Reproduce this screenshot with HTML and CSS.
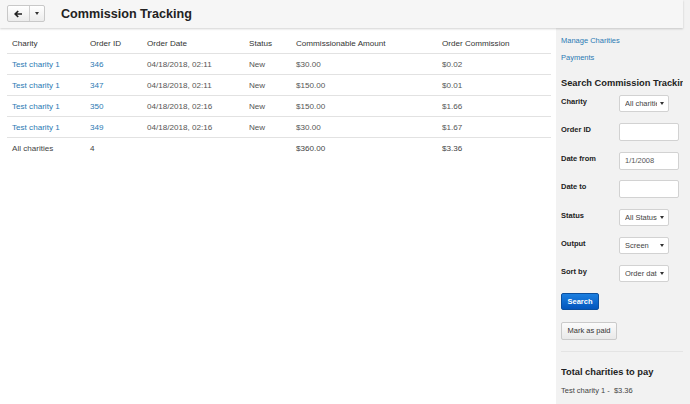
FILE: index.html
```html
<!DOCTYPE html>
<html>
<head>
<meta charset="utf-8">
<link rel="stylesheet" href="styles.css">
</head>
<body>
<header class="topbar">
  <div class="btn-group">
    <span class="tb-btn back"><svg width="9" height="8" viewBox="0 0 9 8"><path d="M4.2 1 L1.2 4 L4.2 7 M1.4 4 H8" fill="none" stroke="#222" stroke-width="1.7"/></svg></span>
    <span class="tb-btn drop"><span class="mini-caret"></span></span>
  </div>
  <h1 class="title">Commission Tracking</h1>
</header>
<div class="layout">
  <main class="main">
    <table class="grid">
      <colgroup>
        <col style="width:78px"><col style="width:57px"><col style="width:102px"><col style="width:47px"><col style="width:146px"><col style="width:114px">
      </colgroup>
      <thead>
        <tr><th>Charity</th><th>Order ID</th><th>Order Date</th><th>Status</th><th>Commissionable Amount</th><th>Order Commission</th></tr>
      </thead>
      <tbody>
        <tr><td><a class="lnk">Test charity 1</a></td><td><a class="lnk">346</a></td><td>04/18/2018, 02:11</td><td>New</td><td>$30.00</td><td>$0.02</td></tr>
        <tr><td><a class="lnk">Test charity 1</a></td><td><a class="lnk">347</a></td><td>04/18/2018, 02:11</td><td>New</td><td>$150.00</td><td>$0.01</td></tr>
        <tr><td><a class="lnk">Test charity 1</a></td><td><a class="lnk">350</a></td><td>04/18/2018, 02:16</td><td>New</td><td>$150.00</td><td>$1.66</td></tr>
        <tr><td><a class="lnk">Test charity 1</a></td><td><a class="lnk">349</a></td><td>04/18/2018, 02:16</td><td>New</td><td>$30.00</td><td>$1.67</td></tr>
        <tr class="total"><td>All charities</td><td>4</td><td></td><td></td><td>$360.00</td><td>$3.36</td></tr>
      </tbody>
    </table>
  </main>
  <aside class="sidebar">
    <a class="side-link">Manage Charities</a>
    <a class="side-link">Payments</a>
    <h2 class="side-title">Search Commission Tracking</h2>
    <div class="form">
      <div class="frow"><span class="flabel">Charity</span><div class="sel"><span class="sel-text">All charities</span><span class="caret"></span></div></div>
      <div class="frow"><span class="flabel">Order ID</span><div class="inp"></div></div>
      <div class="frow"><span class="flabel">Date from</span><div class="inp">1/1/2008</div></div>
      <div class="frow"><span class="flabel">Date to</span><div class="inp"></div></div>
      <div class="frow"><span class="flabel">Status</span><div class="sel"><span class="sel-text">All Statuses</span><span class="caret"></span></div></div>
      <div class="frow"><span class="flabel">Output</span><div class="sel"><span class="sel-text">Screen</span><span class="caret"></span></div></div>
      <div class="frow"><span class="flabel">Sort by</span><div class="sel"><span class="sel-text">Order date</span><span class="caret"></span></div></div>
    </div>
    <div class="btn-primary">Search</div>
    <div class="btn-default">Mark as paid</div>
    <div class="side-sep"></div>
    <h2 class="side-title total-title">Total charities to pay</h2>
    <div class="side-text">Test charity 1 -&nbsp; $3.36</div>
  </aside>
</div>
</body>
</html>
```
FILE: styles.css
```css
html, body {
  margin: 0;
  padding: 0;
}
body {
  width: 690px;
  height: 404px;
  overflow: hidden;
  background: #f2f2f2;
  font-family: "Liberation Sans", Arial, sans-serif;
  color: #333;
}
.topbar {
  height: 28px;
  margin-right: 7px;
  background: #f6f6f6;
  box-shadow: 0 1px 2px rgba(0,0,0,0.18);
  display: flex;
  align-items: center;
  position: relative;
  z-index: 1;
  box-sizing: border-box;
  padding-left: 7px;
}
.btn-group {
  display: flex;
  height: 17px;
  margin-top: -1px;
  border: 1px solid #c8c8c8;
  border-radius: 2px;
  box-sizing: border-box;
  background: linear-gradient(#ffffff, #ececec);
}
.tb-btn {
  display: flex;
  align-items: center;
  justify-content: center;
}
.back {
  width: 21px;
  border-right: 1px solid #cfcfcf;
}
.drop {
  width: 14px;
}
.mini-caret {
  width: 0;
  height: 0;
  border-left: 2.5px solid transparent;
  border-right: 2.5px solid transparent;
  border-top: 3px solid #333;
}
.title {
  margin: 0 0 0 16px;
  font-size: 12.6px;
  font-weight: bold;
  color: #222;
}
.layout {
  display: flex;
  height: 376px;
}
.main {
  flex: 1;
  background: #fff;
  padding: 5px 0 0 7px;
}
.grid {
  width: 544px;
  border-collapse: collapse;
  table-layout: fixed;
  font-size: 8.1px;
}
.grid th, .grid td {
  height: 20px;
  padding: 0 0 0 5px;
  text-align: left;
  white-space: nowrap;
  border-bottom: 1px solid #e2e2e2;
  vertical-align: middle;
}
.grid th {
  font-weight: normal;
  color: #333;
}
.grid td {
  color: #555;
}
.grid tr.total td {
  border-bottom: none;
  color: #444;
}
.lnk {
  color: #2b7ab4;
  text-decoration: none;
}
.sidebar {
  width: 134px;
  box-sizing: border-box;
  padding: 4px 7px 0 5px;
  overflow: hidden;
  display: flex;
  flex-direction: column;
  align-items: flex-start;
}
.side-link {
  display: block;
  font-size: 7.5px;
  line-height: 17px;
  color: #2b7ab4;
}
.side-title {
  margin: 10px 0 0 0;
  font-size: 9.3px;
  line-height: 14px;
  font-weight: bold;
  color: #222;
  white-space: nowrap;
  width: 122px;
  overflow: hidden;
}
.form {
  margin-top: 4px;
  width: 100%;
}
.frow {
  display: flex;
  height: 28.4px;
  align-items: flex-start;
}
.flabel {
  width: 58px;
  padding-top: 3px;
  font-size: 7.5px;
  line-height: 9px;
  font-weight: bold;
  color: #222;
  flex-shrink: 0;
}
.sel {
  margin-top: 1px;
  width: 50px;
  height: 17px;
  box-sizing: border-box;
  border: 1px solid #d2d2d2;
  border-radius: 2px;
  background: #fff;
  display: flex;
  align-items: center;
  padding: 0 4px 0 5px;
  font-size: 7.5px;
  color: #444;
}
.sel-text {
  flex: 1;
  overflow: hidden;
  white-space: nowrap;
}
.caret {
  flex-shrink: 0;
  margin-left: 3px;
  width: 0;
  height: 0;
  border-left: 2px solid transparent;
  border-right: 2px solid transparent;
  border-top: 3px solid #333;
}
.inp {
  margin-top: 1px;
  width: 60px;
  height: 18px;
  box-sizing: border-box;
  border: 1px solid #d2d2d2;
  border-radius: 2px;
  background: #fff;
  padding-left: 5px;
  font-size: 7.5px;
  line-height: 16px;
  color: #555;
}
.btn-primary {
  margin-top: 0;
  height: 17px;
  width: 38px;
  box-sizing: border-box;
  border: 1px solid #0b4f9e;
  border-radius: 2px;
  background: linear-gradient(#1c7fe0, #0356bd);
  color: #fff;
  font-size: 7.5px;
  font-weight: bold;
  display: flex;
  align-items: center;
  justify-content: center;
}
.btn-default {
  margin-top: 12px;
  height: 18px;
  width: 56px;
  box-sizing: border-box;
  border: 1px solid #cacaca;
  border-radius: 2px;
  background: linear-gradient(#fbfbfb, #e9e9e9);
  color: #333;
  font-size: 7.5px;
  display: flex;
  align-items: center;
  justify-content: center;
}
.side-sep {
  margin-top: 11px;
  width: 122px;
  border-top: 1px solid #e4e4e4;
}
.total-title {
  margin-top: 13px;
}
.side-text {
  margin-top: 6px;
  font-size: 7.5px;
  line-height: 12px;
  color: #444;
  white-space: nowrap;
}
```
